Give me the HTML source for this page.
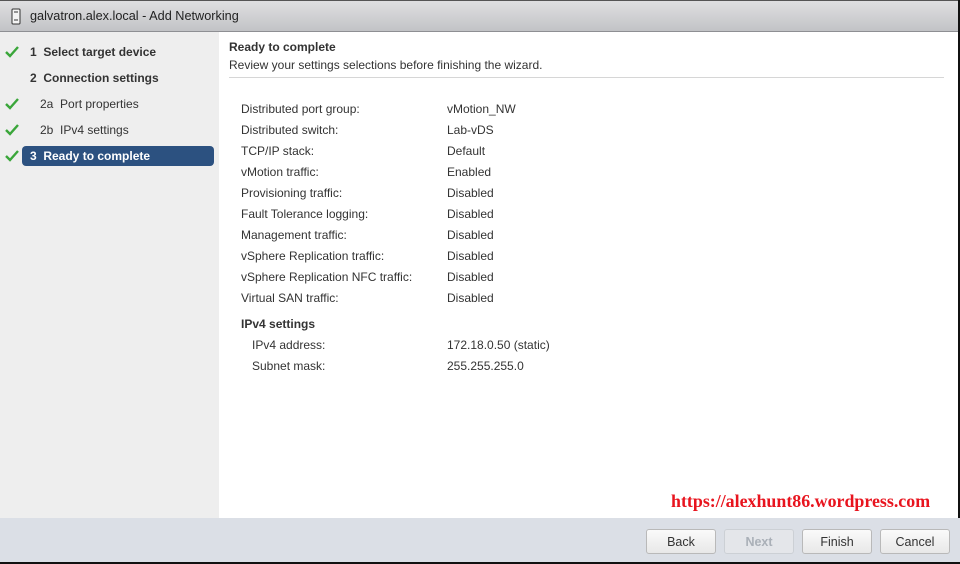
<!DOCTYPE html>
<html><head><meta charset="utf-8"><style>
*{margin:0;padding:0;box-sizing:border-box}
body{width:960px;height:564px;position:relative;overflow:hidden;background:#fff;font-family:"Liberation Sans",Arial,sans-serif;font-size:12px;color:#333}
.t{position:absolute;white-space:nowrap}
#title{position:absolute;left:0;top:0;width:960px;height:32px;background:linear-gradient(#dfdfe1,#c2c3c6);border-bottom:1px solid #8e8f93;border-top:1px solid #555}
#left{position:absolute;left:0;top:32px;width:219px;height:486px;background:#eeeeee}
#foot{position:absolute;left:0;top:518px;width:960px;height:46px;background:#dbdfe6;border-bottom:2px solid #111}
.btn{position:absolute;top:529px;height:25px;width:70px;border:1px solid #b9b9b9;border-radius:3px;background:linear-gradient(#fafafa,#e8e8e8);text-align:center;line-height:24px;font-size:12.5px;color:#333}
.ck{position:absolute;left:5px;width:14px;height:12px}
.lab{left:241px}.val{left:447px}
</style></head><body>
<div id="title">
<svg style="position:absolute;left:11px;top:7px" width="10" height="17" viewBox="0 0 10 17"><rect x="1" y="1" width="8" height="15" rx="1" fill="#f4f4f4" stroke="#333" stroke-width="1"/><line x1="3" y1="4" x2="7" y2="4" stroke="#333"/><line x1="3" y1="12" x2="7" y2="12" stroke="#333"/></svg>
<div class="t" style="left:30px;top:8px;font-size:12.7px;color:#222">galvatron.alex.local - Add Networking</div>
</div>
<div style="position:absolute;right:0;top:0;width:2px;height:564px;background:#111"></div>
<div id="left">
<svg class="ck" style="top:14px" viewBox="0 0 14 12"><path d="M1 6 L5 10 L13 1" stroke="#3aa63a" stroke-width="2.4" fill="none"/></svg>
<div class="t" style="left:30px;top:13px;font-weight:bold;color:#333">1&nbsp; Select target device</div>
<div class="t" style="left:30px;top:39px;font-weight:bold;color:#333">2&nbsp; Connection settings</div>
<svg class="ck" style="top:66px" viewBox="0 0 14 12"><path d="M1 6 L5 10 L13 1" stroke="#3aa63a" stroke-width="2.4" fill="none"/></svg>
<div class="t" style="left:40px;top:65px;color:#333">2a&nbsp; Port properties</div>
<svg class="ck" style="top:92px" viewBox="0 0 14 12"><path d="M1 6 L5 10 L13 1" stroke="#3aa63a" stroke-width="2.4" fill="none"/></svg>
<div class="t" style="left:40px;top:91px;color:#333">2b&nbsp; IPv4 settings</div>
<svg class="ck" style="top:118px" viewBox="0 0 14 12"><path d="M1 6 L5 10 L13 1" stroke="#3aa63a" stroke-width="2.4" fill="none"/></svg>
<div style="position:absolute;left:22px;top:114px;width:192px;height:20px;background:#2c5180;border-radius:4px"></div>
<div class="t" style="left:30px;top:117px;font-weight:bold;color:#fff">3&nbsp; Ready to complete</div>
</div>
<div class="t" style="left:229px;top:40px;font-weight:bold;color:#333">Ready to complete</div>
<div class="t" style="left:229px;top:58px;color:#333">Review your settings selections before finishing the wizard.</div>
<div style="position:absolute;left:229px;top:77px;width:715px;height:1px;background:#d6d6d6"></div>
<div class="t lab" style="top:102px">Distributed port group:</div><div class="t val" style="top:102px">vMotion_NW</div>
<div class="t lab" style="top:123px">Distributed switch:</div><div class="t val" style="top:123px">Lab-vDS</div>
<div class="t lab" style="top:144px">TCP/IP stack:</div><div class="t val" style="top:144px">Default</div>
<div class="t lab" style="top:165px">vMotion traffic:</div><div class="t val" style="top:165px">Enabled</div>
<div class="t lab" style="top:186px">Provisioning traffic:</div><div class="t val" style="top:186px">Disabled</div>
<div class="t lab" style="top:207px">Fault Tolerance logging:</div><div class="t val" style="top:207px">Disabled</div>
<div class="t lab" style="top:228px">Management traffic:</div><div class="t val" style="top:228px">Disabled</div>
<div class="t lab" style="top:249px">vSphere Replication traffic:</div><div class="t val" style="top:249px">Disabled</div>
<div class="t lab" style="top:270px">vSphere Replication NFC traffic:</div><div class="t val" style="top:270px">Disabled</div>
<div class="t lab" style="top:291px">Virtual SAN traffic:</div><div class="t val" style="top:291px">Disabled</div>
<div class="t" style="left:241px;top:317px;font-weight:bold">IPv4 settings</div>
<div class="t" style="left:252px;top:338px">IPv4 address:</div><div class="t val" style="top:338px">172.18.0.50 (static)</div>
<div class="t" style="left:252px;top:359px">Subnet mask:</div><div class="t val" style="top:359px">255.255.255.0</div>
<div class="t" style="left:671px;top:491px;font-family:'Liberation Serif',serif;font-weight:bold;font-size:17.9px;color:#e8141e">https://alexhunt86.wordpress.com</div>
<div id="foot"></div>
<div class="btn" style="left:646px">Back</div>
<div class="btn" style="left:724px;color:#aab0b8;font-weight:bold;background:#e4e6ea;border-color:#ccd0d5">Next</div>
<div class="btn" style="left:802px">Finish</div>
<div class="btn" style="left:880px">Cancel</div>
</body></html>
